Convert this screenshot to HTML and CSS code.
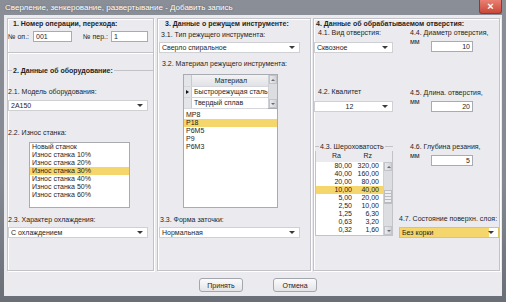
FILE: index.html
```html
<!DOCTYPE html>
<html lang="ru">
<head>
  <meta charset="UTF-8">
  <meta name="viewport" content="width=device-width, initial-scale=1.0">
  <title>Сверление, зенкерование, развертывание - Добавить запись</title>
  <link rel="stylesheet" href="styles.css">
</head>
<body>
  <div class="window">
    <div class="titlebar">
      <span class="title">Сверление, зенкерование, развертывание - Добавить запись</span>
      <span class="close">×</span>
    </div>
    <div class="client">
      <div class="panels">

        <!-- 1-2: операция и оборудование -->
        <div class="panel col1">
          <div class="head">1. Номер операции, перехода:</div>
          <div class="op-row">
            <span class="op-label">№ оп.:</span>
            <div class="input op-input">001</div>
            <span class="op-label per">№ пер.:</span>
            <div class="input per-input">1</div>
          </div>
          <div class="divider"></div>
          <div class="legend-line group2"><span>2. Данные об оборудование:</span></div>
          <div class="lbl l21">2.1. Модель оборудования:</div>
          <div class="select sel-c1 s21">2А150</div>
          <div class="lbl l22">2.2. Износ станка:</div>
          <ul class="list wear">
            <li>Новый станок</li>
            <li>Износ станка 10%</li>
            <li>Износ станка 20%</li>
            <li class="sel">Износ станка 30%</li>
            <li>Износ станка 40%</li>
            <li>Износ станка 50%</li>
            <li>Износ станка 60%</li>
          </ul>
          <div class="lbl l23">2.3. Характер охлаждения:</div>
          <div class="select sel-c1 s23">С охлаждением</div>
        </div>

        <!-- 3: режущий инструмент -->
        <div class="panel col2">
          <div class="head">3. Данные о режущем инструменте:</div>
          <div class="lbl l31">3.1. Тип режущего инструмента:</div>
          <div class="select sel-c2 s31">Сверло спиральное</div>
          <div class="lbl l32">3.2. Материал режущего инструмента:</div>
          <div class="mgrid">
            <div class="mgrid-cells">
              <div class="mrow mhead"><span class="rh"></span><span class="mcell">Материал</span></div>
              <div class="mrow"><span class="rh cur"></span><span class="mcell">Быстрорежущая сталь</span></div>
              <div class="mrow"><span class="rh"></span><span class="mcell">Твердый сплав</span></div>
            </div>
            <div class="vscroll small">
              <span class="sb-btn up"></span>
              <span class="sb-track"></span>
              <span class="sb-btn down"></span>
            </div>
          </div>
          <ul class="list grades">
            <li>МР8</li>
            <li class="sel">Р18</li>
            <li>Р6М5</li>
            <li>Р9</li>
            <li>Р6М3</li>
          </ul>
          <div class="lbl l33">3.3. Форма заточки:</div>
          <div class="select sel-c2 s33">Нормальная</div>
        </div>

        <!-- 4: обрабатываемое отверстие -->
        <div class="panel col3">
          <div class="head">4. Данные об обрабатываемом отверстия:</div>
          <div class="c3">
            <div class="c3-left">
              <div class="lbl l41">4.1. Вид отверстия:</div>
              <div class="select s41">Сквозное</div>
              <div class="lbl l42">4.2. Квалитет</div>
              <div class="select s42">12</div>
              <div class="rough">
                <div class="legend-line"><span>4.3. Шероховатость</span></div>
                <div class="rough-body">
                  <div class="rhead"><span>Ra</span><span>Rz</span></div>
                  <div class="rgrid">
                    <div class="rrows">
                      <div class="rr"><span>80,00</span><span>320,00</span></div>
                      <div class="rr"><span>40,00</span><span>160,00</span></div>
                      <div class="rr"><span>20,00</span><span>80,00</span></div>
                      <div class="rr sel"><span>10,00</span><span>40,00</span></div>
                      <div class="rr"><span>5,00</span><span>20,00</span></div>
                      <div class="rr"><span>2,50</span><span>10,00</span></div>
                      <div class="rr"><span>1,25</span><span>6,30</span></div>
                      <div class="rr"><span>0,63</span><span>3,20</span></div>
                      <div class="rr"><span>0,32</span><span>1,60</span></div>
                    </div>
                    <div class="vscroll">
                      <span class="sb-btn up"></span>
                      <span class="sb-track"><span class="sb-thumb"></span></span>
                      <span class="sb-btn down"></span>
                    </div>
                  </div>
                </div>
              </div>
            </div>
            <div class="c3-right">
              <div class="lbl l44">4.4. Диаметр отверстия,</div>
              <div class="mm-row"><span class="mm">мм</span><div class="input num">10</div></div>
              <div class="lbl l45">4.5. Длина. отверстия,</div>
              <div class="mm-row"><span class="mm">мм</span><div class="input num">20</div></div>
              <div class="lbl l46">4.6. Глубина резания,</div>
              <div class="mm-row"><span class="mm">мм</span><div class="input num">5</div></div>
              <div class="lbl l47">4.7. Состояние поверхн. слоя:</div>
              <div class="select s47">Без корки</div>
            </div>
          </div>
        </div>

      </div>
      <div class="buttons">
        <button>Принять</button>
        <button>Отмена</button>
      </div>
    </div>
  </div>
</body>
</html>
```

FILE: styles.css
```css
* { box-sizing: border-box; margin: 0; padding: 0; }
body { width: 506px; height: 302px; overflow: hidden; background: #7d8189; font-family: "Liberation Sans", Arial, sans-serif; font-size: 7px; color: #1e1e1e; }

.window { width: 506px; height: 302px; display: flex; flex-direction: column; padding: 0 4px 6px; background: linear-gradient(#8a8e97, #858991 60%, #6a6e77); }
.titlebar { height: 15px; display: flex; justify-content: space-between; align-items: center; }
.title { color: #fff; font-size: 8px; padding-left: 1px; text-shadow: 0 0 2px #5a5e66; }
.close { align-self: flex-start; width: 23px; height: 14px; background: linear-gradient(#e98072, #c9483b); border: 1px solid #8e3a33; border-top: none; border-radius: 0 0 3px 3px; color: #fff; font-size: 11px; font-weight: bold; line-height: 12px; text-align: center; }

.client { flex: 1; display: flex; flex-direction: column; background: #ebebef; padding: 3px 2px 0 3px; }
.panels { display: flex; height: 253px; }
.panel { border: 1px solid #c2c3c9; box-shadow: inset 1px 1px 0 #fff, 1px 1px 0 #fff; display: flex; flex-direction: column; }
.col1 { width: 147px; margin-right: 3px; }
.col2 { width: 154px; margin-right: 2px; }
.col3 { width: 187px; }

.head { height: 10px; line-height: 10px; font-weight: bold; white-space: nowrap; }
.lbl { height: 10px; line-height: 10px; white-space: nowrap; }

.input { height: 11px; line-height: 9px; background: #fff; border: 1px solid #a8abb2; padding: 0 2px; }
.select { position: relative; height: 11px; line-height: 9px; background: #fff; border: 1px solid #cfd0d4; padding: 0 2px; }
.select::after { content: ""; position: absolute; right: 4px; top: 3px; border-left: 3px solid transparent; border-right: 3px solid transparent; border-top: 3px solid #3a3a3a; }

.list { list-style: none; background: #fff; border: 1px solid #a8abb2; }
.list li { height: 8px; line-height: 8px; padding-left: 2px; white-space: nowrap; }
.sel { background: #f4d66c; }

.legend-line { display: flex; align-items: center; height: 10px; }
.legend-line::before { content: ""; width: 4px; border-top: 1px solid #c2c3c9; }
.legend-line::after { content: ""; flex: 1; border-top: 1px solid #c2c3c9; }
.legend-line span { padding: 0 1px; white-space: nowrap; }

/* колонка 1 */
.col1 .head { padding-left: 5px; }
.op-row { display: flex; align-items: center; height: 11px; margin-top: 2px; }
.op-label { width: 25px; }
.op-label.per { width: 28px; margin-left: 11px; }
.op-input { width: 39px; }
.per-input { width: 37px; }
.divider { height: 2px; margin-top: 10px; border-top: 1px solid #c2c3c9; border-bottom: 1px solid #fff; }
.group2 { margin-top: 11px; font-weight: bold; }
.l21 { margin-top: 12px; }
.sel-c1 { width: 140px; }
.s21 { margin-top: 3px; }
.l22 { margin-top: 17px; }
.wear { margin: 4px 0 0 21px; width: 101px; height: 66px; }
.l23 { margin-top: 7px; }
.s23 { margin-top: 2px; }

/* колонка 2 */
.col2 .head { padding-left: 7px; }
.l31 { margin-top: 1px; padding-left: 3px; }
.sel-c2 { width: 141px; margin-left: 1px; }
.s31 { margin-top: 2px; }
.l32 { margin-top: 6px; padding-left: 4px; }
.mgrid { display: flex; width: 95px; height: 35px; margin: 5px 0 0 25px; border: 1px solid #a8abb2; background: #fff; }
.mgrid-cells { flex: 1; }
.mrow { display: flex; height: 11px; border-bottom: 1px solid #d6d7dc; }
.mrow.mhead { height: 12px; background: linear-gradient(#f3f3f5, #e1e2e6); }
.rh { position: relative; width: 8px; background: #e4e5e9; border-right: 1px solid #c8c9ce; }
.rh.cur::after { content: ""; position: absolute; left: 2px; top: 3px; border-top: 2.5px solid transparent; border-bottom: 2.5px solid transparent; border-left: 3px solid #111; }
.mcell { flex: 1; line-height: 10px; padding-left: 2px; white-space: nowrap; }
.mhead .mcell { text-align: center; line-height: 11px; }
.grades { width: 95px; height: 99px; margin-left: 25px; border-top: none; padding-top: 2px; }
.l33 { margin-top: 7px; padding-left: 2px; }
.s33 { margin-top: 2px; }

.vscroll { display: flex; flex-direction: column; width: 9px; background: #dcdde1; border-left: 1px solid #cfd0d5; }
.vscroll.small { width: 10px; }
.sb-btn { position: relative; height: 9px; background: linear-gradient(90deg, #e9eaee, #d2d3d8); border: 1px solid #c3c4ca; }
.sb-btn::after { content: ""; position: absolute; left: 1.5px; top: 2.5px; border-left: 2.5px solid transparent; border-right: 2.5px solid transparent; }
.sb-btn.up::after { border-bottom: 2.5px solid #6a6c73; }
.sb-btn.down::after { border-top: 2.5px solid #6a6c73; }
.sb-track { flex: 1; display: flex; flex-direction: column; }
.sb-thumb { height: 14px; margin-top: 19px; background: repeating-linear-gradient(#eceef1 0 2px, #b8bac0 2px 3px); border: 1px solid #bcbec4; }

/* колонка 3 */
.col3 .head { height: 9px; line-height: 9px; padding-left: 2px; }
.c3 { display: flex; }
.c3-left { width: 79px; margin-right: 6px; display: flex; flex-direction: column; }
.c3-right { width: 100px; display: flex; flex-direction: column; }
.l41 { padding-left: 4px; }
.s41 { margin-top: 4px; }
.l42 { margin-top: 34px; padding-left: 4px; }
.s42 { margin-top: 4px; text-align: center; padding-right: 10px; }
.rough { margin: 29px 0 0 1px; width: 78px; }
.rough-body { border: 1px solid #c2c3c9; border-top: none; }
.rhead { display: flex; height: 10px; line-height: 10px; }
.rhead span:first-child { width: 25px; text-align: right; }
.rhead span:last-child { width: 31px; text-align: right; }
.rgrid { display: flex; height: 73px; margin-top: 1px; background: #fff; }
.rrows { flex: 1; }
.rr { display: flex; height: 8px; line-height: 8px; }
.rr span:first-child { width: 36px; text-align: right; }
.rr span:last-child { width: 27px; text-align: right; }

.l44, .l45, .l46 { padding-left: 11px; }
.mm-row { display: flex; height: 15px; padding-left: 11px; }
.mm { width: 21px; line-height: 8px; }
.num { width: 42px; margin-top: 3px; text-align: right; }
.l45 { margin-top: 35px; }
.l46 { margin-top: 29px; }
.l47 { margin-top: 47px; }
.s47 { margin-top: 3px; background: linear-gradient(90deg, #f4d66c 89px, #fff 89px); border-color: #e0c45c; }

/* кнопки */
.buttons { flex: 1; display: flex; gap: 30px; padding: 7px 0 0 192px; }
button { width: 44px; height: 14px; font-family: inherit; font-size: 7px; color: #1e1e1e; background: linear-gradient(#fbfbfc, #e4e4e8); border: 1px solid #a3a6ad; border-radius: 3px; }
```
